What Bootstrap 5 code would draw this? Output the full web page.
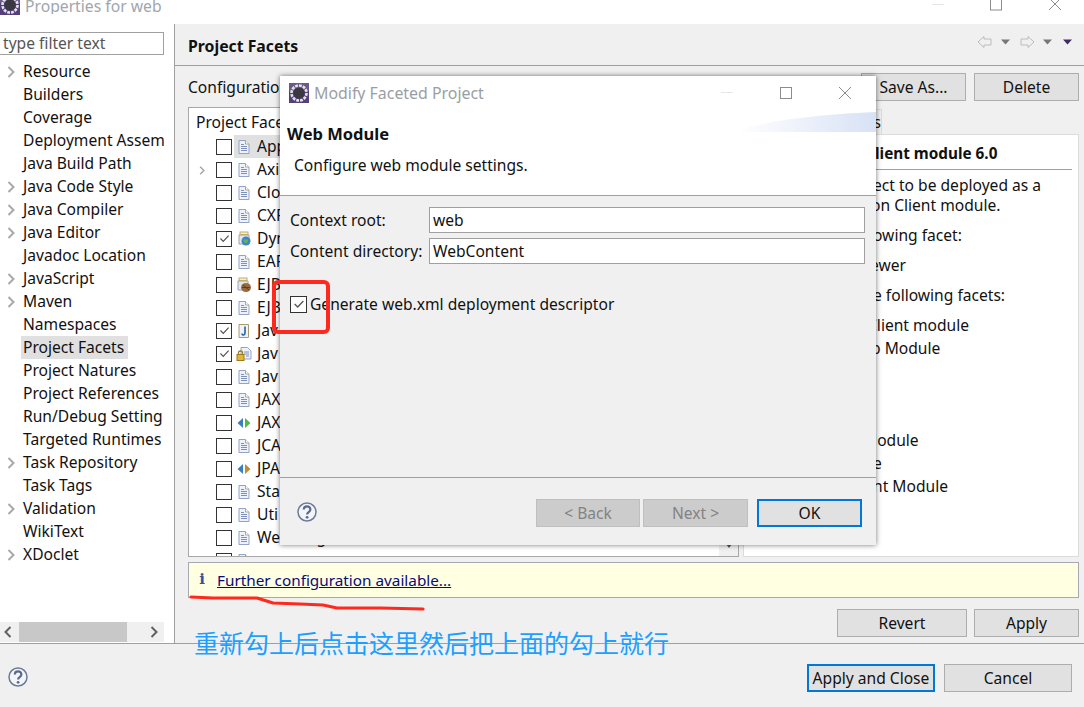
<!DOCTYPE html>
<html lang="zh-CN">
<head>
<meta charset="utf-8">
<title>Properties for web</title>
<link href="https://cdn.jsdelivr.net/npm/bootstrap@5.3.0/dist/css/bootstrap.min.css" rel="stylesheet">
<style>
html,body{margin:0;height:707px;overflow:hidden}
body{font-family:"Noto Sans","Noto Sans CJK SC",sans-serif;font-size:15.6px;line-height:20px;color:#111;background:#f0f0f0}
.wnd{position:relative;width:1084px;height:707px;overflow:hidden}
.ttl{height:24px;background:#fff;position:relative;flex:none}
.ttl-text{color:#a0a6ad;font-size:15.7px;line-height:12px;height:14px;overflow:hidden;padding-left:25px}
.wbtn{position:absolute;top:-2px}
.logo-top{position:absolute;left:0;top:-5px}
.mainrow{height:619px;flex:none}
.side{width:175px;background:#fff;border-right:1px solid #a0a0a0;flex:none}
.flt{margin:8px 10px 0 -1px;height:23px;border:1px solid #a0a0a0;padding:0 0 0 3px;line-height:20px;color:#555;background:#fff}
.tree{flex:1;overflow:hidden;margin:5px 10px 0 0;padding:0;list-style:none}
.tree li{height:23px;line-height:23px;white-space:nowrap;padding-left:23px;position:relative;overflow:hidden}
.tree li span{display:inline-block;height:23px;padding:0 2px;margin-left:-2px}
.chev{position:absolute;left:7px;top:6px}
.tree li span.sel{background:#e0e0e0;padding-right:4px}
.hsb{height:20px;margin-right:10px;background:#f0f0f0;flex:none;margin-bottom:1px}
.hsb-thumb{width:108px;background:#c8c8c8}
.hsb-end{width:19px;padding-left:4px}
.hsb-r{padding-left:5px}
.pane{flex:1;min-width:0}
.panehd{height:42px;border-bottom:1px solid #a0a0a0;padding:0 11px 0 13px;flex:none}
.panehd b{font-size:15.8px;font-weight:700;margin-top:2px}
.panehd svg{margin-bottom:5px}
.panebody{padding:7px 5px 0 13px}
.cfg{height:27px}
.ebtn{height:28px;border:1px solid #adadad;background:#e1e1e1;color:#111;font-size:15.6px;line-height:24px;padding:0;border-radius:0;display:flex;align-items:center;justify-content:center}
.ebtn:hover{background:#e1e1e1;border-color:#adadad;color:#111}
.w105{width:105px}
.split{height:450px;margin-top:7px}
.facets{width:551px;height:450px;background:#fff;border:1px solid #a8a8a8;position:relative;overflow:hidden;flex:none}
.fhead{height:27px;line-height:28px;padding-left:7px;white-space:nowrap}
.frow{height:23px;display:flex;align-items:center;position:relative;white-space:nowrap;padding-left:27px}
.cb{width:16px;height:16px;border:1.5px solid #333;background:#fff;flex:none;display:flex;align-items:center;justify-content:center}
.fico{width:16px;height:16px;margin-left:4px;flex:none}
.flab{margin-left:5px;padding-right:2px;margin-top:-2px}
.frow>*{position:relative}
.frow .hib{position:absolute;left:45px;top:0;width:200px;height:23px;background:#e0e0e0}
.frow .fchev{position:absolute;left:10px;top:8px}
.frow .lowtx{margin-top:3px}
.vsbar{position:absolute;right:0;bottom:0;width:19px;height:13px;background:#f0f0f0}
.det{flex:1;margin-left:4px}
.tabs{height:27px}
.tabitem{width:139px;height:25px;margin-top:2px;border:1px solid #dcdcdc;border-bottom:0;text-align:right;line-height:24px;padding-right:0;background:#f0f0f0;white-space:nowrap;overflow:hidden}
.detbody{height:423px;background:#fff;border:1px solid #dcdcdc;padding:7px 6px 0 131px;overflow:hidden;white-space:nowrap;line-height:20px}
.detbody h6{font-size:15.3px;font-weight:700;margin:0;line-height:22px;padding-bottom:5px;border-bottom:1px solid #a0a0a0}
.detbody p{margin:0}
.g3{margin-top:3px !important}.g5{margin-top:5px !important}.g10{margin-top:10px !important}.g72{margin-top:72px !important}
.c2{margin-left:-2px !important}.c4{margin-left:-4px !important}.c5{margin-left:-5px !important}.c8{margin-left:-8px !important}.c12{margin-left:-12px !important}
.infobar{height:36px;margin-top:5px;background:#ffffe1;border:1px solid #a8a8b0;padding-left:10px}
.infobar a{color:#0a0a78;margin-left:12px;font-size:15.3px}
.info-i{color:#3a4f9c;font-family:"DejaVu Serif",serif;font-weight:700;font-size:15px;width:6px;text-align:center;margin-top:-3px}
.acts{margin-top:11px}
.foot{height:64px;flex:none;border-top:1px solid #a0a0a0;padding:20px 12px 0 8px;background:#f0f0f0}
.foot>svg{margin-top:3px}
.defb{border:2px solid #0078d7}
.dlg{position:absolute;left:280px;top:76px;width:596px;height:469px;background:#f0f0f0;box-shadow:0 0 5px rgba(0,0,0,.55);overflow:hidden}
.dlg-top{height:120px;background:#fff;border-bottom:1px solid #a0a0a0;position:relative;flex:none}
.dlg-ttl{height:34px;padding-left:9px;color:#9a9ea4;font-size:15.9px}
.dlg-ttl span{margin-left:5px}
.dlg-h{font-weight:700;font-size:16.5px;padding-left:7px;margin-top:14px;line-height:20px}
.dlg-s{padding-left:14px;margin-top:11px}
.grad{position:absolute;right:0;top:36px;width:141px;height:20px}
.dlg-body{flex:1;padding:11px 11px 0 10px}
.fl{height:26px;margin-bottom:5px}
.fl label{width:139px;flex:none;white-space:nowrap}
.fl div{flex:1;height:26px;background:#fff;border:1px solid #a0a0a0;padding-left:3px;line-height:24px}
.chkrow{margin-top:31px;height:18px}
.chkrow .cb{margin-right:3px;width:17px;height:17px}
.dlg-foot{height:68px;flex:none;border-top:1px solid #a0a0a0;padding:21px 14px 0 17px}
.dlg-foot>svg{margin-top:3px}
.dis,.dis:disabled{background:#ccc;border-color:#bfbfbf;color:#838383;opacity:1}
.mr3{margin-right:3px}.mr7{margin-right:7px}.mr9{margin-right:9px}
.note{position:absolute;left:194px;top:625px;color:#1e9fff;font-family:"Noto Sans CJK SC",sans-serif;font-size:25px;line-height:34px;white-space:nowrap}
.marks{position:absolute;left:0;top:0;pointer-events:none}
</style>
</head>
<body>
<svg width="0" height="0" style="position:absolute">
 <defs>
  <symbol id="doc" viewBox="0 0 16 16"><path d="M3 1.500h6.500l3.500 3.500V14.500H3z" fill="#eef2fa" stroke="#93a3c6"/><path d="M9.500 1.500V5H13" fill="#fff" stroke="#b4a67a"/><path d="M5 5.500h3M5 7.500h6M5 9.500h6M5 11.500h6" stroke="#7b90bd"/></symbol>
  <symbol id="gear" viewBox="0 0 20 20"><rect width="20" height="20" fill="#54407a"/><rect width="20" height="8" fill="#6a5a8a"/><circle cx="10" cy="10" r="7.500" fill="none" stroke="#e4e4e4" stroke-width="2.600" stroke-dasharray="2.800 1.100"/><circle cx="10" cy="10" r="5.500" fill="#3a3840"/></symbol>
  <symbol id="help" viewBox="0 0 20 20"><circle cx="10" cy="10" r="9" fill="#f4f5f8" stroke="#6c7a98" stroke-width="1.500"/><path d="M6.800 7.500c0-4.300 6.600-4.300 6.600 0 0 2.700-3.300 2.600-3.300 5" fill="none" stroke="#5a6a8c" stroke-width="2.200"/><circle cx="10.100" cy="15.300" r="1.400" fill="#5a6a8c"/></symbol>
  <symbol id="chk" viewBox="0 0 16 16"><path d="M3 8l3.500 3.500L13 4.500" fill="none" stroke="#555" stroke-width="1.500"/></symbol>
  <symbol id="chv" viewBox="0 0 8 12"><path d="M1.500 1l5 5-5 5" fill="none" stroke="#a8a8a8" stroke-width="2"/></symbol>
 </defs>
</svg>
<div class="wnd d-flex flex-column">
 <div class="ttl">
  <svg class="logo-top" width="20" height="20"><use href="#gear"/></svg>
  <div class="ttl-text">Properties for web</div>
  <svg class="wbtn" style="left:925px" width="20" height="12"><path d="M7 6.500h12" stroke="#e6e6e6"/></svg>
  <svg class="wbtn" style="left:990px" width="12" height="13"><rect x=".5" y="-2" width="11" height="14" fill="none" stroke="#8c8c8c"/></svg>
  <svg class="wbtn" style="left:1048px" width="14" height="14"><path d="M1 0l12 12M13 0L1 12" stroke="#8c8c8c"/></svg>
 </div>
 <div class="mainrow d-flex">
  <aside class="side d-flex flex-column">
   <div class="flt">type filter text</div>
   <ul class="tree">
    <li><svg class="chev" width="8" height="12"><use href="#chv"/></svg>Resource</li>
    <li>Builders</li>
    <li>Coverage</li>
    <li>Deployment Assem</li>
    <li>Java Build Path</li>
    <li><svg class="chev" width="8" height="12"><use href="#chv"/></svg>Java Code Style</li>
    <li><svg class="chev" width="8" height="12"><use href="#chv"/></svg>Java Compiler</li>
    <li><svg class="chev" width="8" height="12"><use href="#chv"/></svg>Java Editor</li>
    <li>Javadoc Location</li>
    <li><svg class="chev" width="8" height="12"><use href="#chv"/></svg>JavaScript</li>
    <li><svg class="chev" width="8" height="12"><use href="#chv"/></svg>Maven</li>
    <li>Namespaces</li>
    <li><span class="sel">Project Facets</span></li>
    <li>Project Natures</li>
    <li>Project References</li>
    <li>Run/Debug Setting</li>
    <li>Targeted Runtimes</li>
    <li><svg class="chev" width="8" height="12"><use href="#chv"/></svg>Task Repository</li>
    <li>Task Tags</li>
    <li><svg class="chev" width="8" height="12"><use href="#chv"/></svg>Validation</li>
    <li>WikiText</li>
    <li><svg class="chev" width="8" height="12"><use href="#chv"/></svg>XDoclet</li>
   </ul>
   <div class="hsb d-flex">
    <div class="hsb-end d-flex align-items-center"><svg width="8" height="12"><path d="M6.500 1l-5 5 5 5" fill="none" stroke="#606060" stroke-width="2"/></svg></div>
    <div class="hsb-thumb"></div>
    <div class="flex-grow-1"></div>
    <div class="hsb-end hsb-r d-flex align-items-center"><svg width="8" height="12"><path d="M1.500 1l5 5-5 5" fill="none" stroke="#606060" stroke-width="2"/></svg></div>
   </div>
  </aside>
  <section class="pane d-flex flex-column">
   <div class="panehd d-flex align-items-center justify-content-between">
    <b>Project Facets</b>
    <svg width="96" height="14" viewBox="0 0 96 14">
     <path d="M1 7l6-5.500V4h7v6H7v2.500z" fill="none" stroke="#bcbcbc"/><path d="M24 4.500h9l-4.500 5z" fill="#777"/>
     <path d="M57 7l-6-5.500V4h-7v6h7v2.500z" fill="none" stroke="#bcbcbc"/><path d="M66 4.500h9l-4.500 5z" fill="#777"/>
     <path d="M86 4.500h9l-4.500 5z" fill="#3f2a68"/>
    </svg>
   </div>
   <div class="panebody flex-grow-1">
    <div class="cfg d-flex align-items-center">
     <span class="flex-grow-1">Configuratio</span>
     <button class="btn ebtn w105" type="button">Save As...</button>
     <button class="btn ebtn w105 ms-2" type="button">Delete</button>
    </div>
    <div class="split d-flex">
     <div class="facets">
      <div class="fhead">Project Face</div>
      <div class="frow"><i class="hib"></i><div class="cb"></div><svg class="fico"><use href="#doc"/></svg><span class="flab">App</span></div>
      <div class="frow"><svg class="fchev" width="6" height="9" viewBox="0 0 8 12"><use href="#chv"/></svg><div class="cb"></div><svg class="fico"><use href="#doc"/></svg><span class="flab">Axi</span></div>
      <div class="frow"><div class="cb"></div><svg class="fico"><use href="#doc"/></svg><span class="flab">Clo</span></div>
      <div class="frow"><div class="cb"></div><svg class="fico"><use href="#doc"/></svg><span class="flab">CXF</span></div>
      <div class="frow"><div class="cb"><svg width="13" height="13"><use href="#chk"/></svg></div><svg class="fico" viewBox="0 0 16 16"><path d="M3 4h10v9H3z" fill="#dfe7f2" stroke="#9aa7bb"/><rect x="4" y="1" width="8" height="2.500" fill="#f3efd0" stroke="#c2ae6a"/><circle cx="10" cy="10" r="4.500" fill="#3d86c6"/><path d="M7 9c2-2 3 1 5-1 1 3-2 5-3 4z" fill="#6db04a"/></svg><span class="flab">Dyn</span></div>
      <div class="frow"><div class="cb"></div><svg class="fico"><use href="#doc"/></svg><span class="flab">EAR</span></div>
      <div class="frow"><div class="cb"></div><svg class="fico" viewBox="0 0 16 16"><path d="M2 4h10v9H2z" fill="#dfe7f2" stroke="#9aa7bb"/><rect x="3" y="1" width="8" height="2.500" fill="#f3efd0" stroke="#c2ae6a"/><ellipse cx="10" cy="10.500" rx="5" ry="4.500" fill="#9b6a3c"/><path d="M6 10.500h8M7 8l6 5" stroke="#5f3d1e"/></svg><span class="flab">EJB</span></div>
      <div class="frow"><div class="cb"></div><svg class="fico"><use href="#doc"/></svg><span class="flab">EJB</span></div>
      <div class="frow"><div class="cb"><svg width="13" height="13"><use href="#chk"/></svg></div><svg class="fico" viewBox="0 0 16 16"><path d="M3 1.500h9.500v13H3z" fill="#eef2fa" stroke="#a49b72"/><path d="M9 3.500V10c0 2.500-3 2.500-3 .5" fill="none" stroke="#2f5f9e" stroke-width="1.600"/></svg><span class="flab">Jav</span></div>
      <div class="frow"><div class="cb"><svg width="13" height="13"><use href="#chk"/></svg></div><svg class="fico" viewBox="0 0 16 16"><path d="M5 1.500h6.500L15 5v8H5z" fill="#eef2fa" stroke="#93a3c6"/><path d="M8 6h5M8 8h5M10 10h3" stroke="#7b90bd"/><rect x="1" y="8.500" width="7" height="6" fill="#e0b53a" stroke="#a07b1a"/><path d="M2.500 8.500V6.500c0-2 4-2 4 0v2" fill="none" stroke="#a07b1a" stroke-width="1.300"/></svg><span class="flab">Jav</span></div>
      <div class="frow"><div class="cb"></div><svg class="fico"><use href="#doc"/></svg><span class="flab">Jav</span></div>
      <div class="frow"><div class="cb"></div><svg class="fico"><use href="#doc"/></svg><span class="flab">JAX</span></div>
      <div class="frow"><div class="cb"></div><svg class="fico" viewBox="0 0 16 16"><path d="M7 3L1.500 8 7 13z" fill="#3a7fc0"/><path d="M9 3l5.500 5L9 13z" fill="#53b847"/></svg><span class="flab">JAX</span></div>
      <div class="frow"><div class="cb"></div><svg class="fico"><use href="#doc"/></svg><span class="flab">JCA</span></div>
      <div class="frow"><div class="cb"></div><svg class="fico" viewBox="0 0 16 16"><path d="M7 3L1.500 8 7 13z" fill="#3a7fc0"/><path d="M9 3l5.500 5L9 13z" fill="#c08a3a"/></svg><span class="flab">JPA</span></div>
      <div class="frow"><div class="cb"></div><svg class="fico"><use href="#doc"/></svg><span class="flab">Sta</span></div>
      <div class="frow"><div class="cb"></div><svg class="fico"><use href="#doc"/></svg><span class="flab">Uti</span></div>
      <div class="frow"><div class="cb"></div><svg class="fico"><use href="#doc"/></svg><span class="flab">Web Fragment</span></div>
      <div class="frow"><div class="cb"></div><svg class="fico"><use href="#doc"/></svg><span class="flab lowtx">Webdoclet (XDoclet)</span></div>
      <div class="vsbar d-flex justify-content-center"><svg width="8" height="6"><path d="M1 1h6L4 5z" fill="#555"/></svg></div>
     </div>
     <div class="det d-flex flex-column">
      <div class="tabs d-flex"><div class="tabitem">s</div></div>
      <div class="detbody">
       <h6>lient module 6.0</h6>
       <p class="g5 c2">ect to be deployed as a</p>
       <p class="c4">on Client module.</p>
       <p class="g10 c2">owing facet:</p>
       <p class="g10 c5">ewer</p>
       <p class="g10 c2">e following facets:</p>
       <p class="g10 c8">Client module</p>
       <p class="g3 c4">b Module</p>
       <p class="g72 c12">Module</p>
       <p class="g3 c2">e</p>
       <p class="g3 c2">nt Module</p>
      </div>
     </div>
    </div>
    <div class="infobar d-flex align-items-center">
     <span class="info-i">i</span>
     <a href="#">Further configuration available...</a>
    </div>
    <div class="acts d-flex justify-content-end">
     <button class="btn ebtn mr7" style="width:130px" type="button">Revert</button>
     <button class="btn ebtn w105" type="button">Apply</button>
    </div>
   </div>
  </section>
 </div>
 <footer class="foot d-flex align-items-start">
  <svg width="20" height="20"><use href="#help"/></svg>
  <div class="flex-grow-1"></div>
  <button class="btn ebtn defb mr9" style="width:128px" type="button">Apply and Close</button>
  <button class="btn ebtn" style="width:128px" type="button">Cancel</button>
 </footer>

 <div class="dlg d-flex flex-column">
  <div class="dlg-top">
   <div class="dlg-ttl d-flex align-items-center"><svg width="20" height="20"><use href="#gear"/></svg><span>Modify Faceted Project</span></div>
   <svg class="wbtn" style="left:438px;top:6px" width="20" height="20"><path d="M3 10.500h12" stroke="#e6e6e6"/></svg>
   <svg class="wbtn" style="left:500px;top:11px" width="12" height="12"><rect x=".5" y=".5" width="11" height="11" fill="none" stroke="#8c8c8c"/></svg>
   <svg class="wbtn" style="left:558px;top:10px" width="14" height="14"><path d="M1 1l12 12M13 1L1 13" stroke="#8c8c8c"/></svg>
   <svg class="grad" viewBox="0 0 141 20"><defs><linearGradient id="gr" x1="0" x2="1" y1="0" y2="0"><stop offset="0" stop-color="#fff"/><stop offset="1" stop-color="#d8e2f5"/></linearGradient></defs><path d="M0 20C30 8 90 2 141 0V20z" fill="url(#gr)"/></svg>
   <div class="dlg-h">Web Module</div>
   <div class="dlg-s">Configure web module settings.</div>
  </div>
  <div class="dlg-body">
   <div class="fl d-flex align-items-center"><label>Context root:</label><div>web</div></div>
   <div class="fl d-flex align-items-center"><label>Content directory:</label><div>WebContent</div></div>
   <div class="chkrow d-flex align-items-center"><span class="cb"><svg width="14" height="14"><use href="#chk"/></svg></span><span>Generate web.xml deployment descriptor</span></div>
  </div>
  <div class="dlg-foot d-flex align-items-start">
   <svg width="20" height="20"><use href="#help"/></svg>
   <div class="flex-grow-1"></div>
   <button class="btn ebtn dis mr3" style="width:104px" disabled type="button">&lt; Back</button>
   <button class="btn ebtn dis w105 mr9" disabled type="button">Next &gt;</button>
   <button class="btn ebtn defb w105" type="button">OK</button>
  </div>
 </div>

 <svg class="marks" width="1084" height="707" viewBox="0 0 1084 707">
  <rect x="274" y="282" width="54" height="50" rx="4" fill="none" stroke="#ff2a1f" stroke-width="4"/>
  <path d="M191 597L213 598 257 598 273 603 300 604 323 605 337 608 380 608 423 609" fill="none" stroke="#ff2a1f" stroke-width="3.200" stroke-linecap="round" stroke-linejoin="round"/>
 </svg>
 <div class="note">重新勾上后点击这里然后把上面的勾上就行</div>
</div>
<script src="https://cdn.jsdelivr.net/npm/bootstrap@5.3.0/dist/js/bootstrap.bundle.min.js"></script>
</body>
</html>
